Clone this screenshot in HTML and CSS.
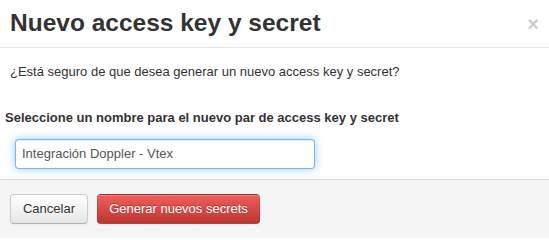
FILE: index.html
```html
<!DOCTYPE html>
<html lang="es">
<head>
<meta charset="utf-8">
<title>Nuevo access key y secret</title>
<link rel="stylesheet" href="styles.css">
</head>
<body>
<div class="modal">
  <div class="modal-header">
    <h3 class="modal-title">Nuevo access key y secret</h3>
    <button class="close" type="button" aria-label="Cerrar">&times;</button>
  </div>
  <div class="modal-body">
    <p class="question">¿Está seguro de que desea generar un nuevo access key y secret?</p>
    <label class="field-label" for="keyname">Seleccione un nombre para el nuevo par de access key y secret</label>
    <input class="text-input" id="keyname" type="text" value="Integración Doppler - Vtex">
  </div>
  <div class="modal-footer">
    <button class="btn btn-default" type="button">Cancelar</button>
    <button class="btn btn-danger" type="button">Generar nuevos secrets</button>
  </div>
</div>
</body>
</html>
```
FILE: styles.css
```css
html, body {
  margin: 0;
  padding: 0;
  background: #ffffff;
}
body {
  font-family: "Liberation Sans", Arial, sans-serif;
  font-size: 13px;
  line-height: 20px;
  color: #333333;
}
.modal {
  width: 549px;
}
.modal-header {
  display: flex;
  justify-content: space-between;
  align-items: flex-start;
  padding: 8px 10px 9px 10px;
  border-bottom: 1px solid #e5e5e5;
}
.modal-title {
  margin: 0;
  font-size: 24.5px;
  line-height: 30px;
  font-weight: bold;
  color: #333333;
}
.close {
  margin: 6px 0 0 0;
  padding: 0;
  border: 0;
  background: transparent;
  font-family: "Liberation Sans", Arial, sans-serif;
  font-size: 20px;
  font-weight: bold;
  line-height: 20px;
  color: #000000;
  opacity: 0.2;
  text-shadow: 0 1px 0 #ffffff;
  cursor: pointer;
}
.modal-body {
  display: flex;
  flex-direction: column;
  align-items: flex-start;
  padding: 14px 0 10px 0;
}
.question {
  margin: 0 0 26px 10px;
}
.field-label {
  display: block;
  margin: 0 0 11px 5px;
  font-weight: bold;
}
.text-input {
  box-sizing: border-box;
  width: 300px;
  height: 30px;
  margin: 0 0 0 15px;
  padding: 3px 6px 5px 6px;
  font-family: "Liberation Sans", Arial, sans-serif;
  font-size: 13px;
  line-height: 20px;
  color: #555555;
  background: #ffffff;
  border: 1px solid rgba(82, 168, 236, 0.8);
  border-radius: 4px;
  box-shadow: inset 0 1px 1px rgba(0, 0, 0, 0.075), 0 0 8px rgba(82, 168, 236, 0.6);
  outline: none;
}
.modal-footer {
  display: flex;
  gap: 9px;
  padding: 14px 10px 14px 10px;
  background: #f5f5f5;
  border-top: 1px solid #dddddd;
}
.btn {
  box-sizing: border-box;
  height: 30px;
  padding: 4px 0;
  font-family: "Liberation Sans", Arial, sans-serif;
  font-size: 13px;
  line-height: 20px;
  text-align: center;
  white-space: nowrap;
  border-radius: 4px;
  cursor: pointer;
}
.btn-default {
  width: 78px;
  color: #333333;
  text-shadow: 0 1px 1px rgba(255, 255, 255, 0.75);
  background: linear-gradient(to bottom, #ffffff, #e6e6e6);
  border: 1px solid #cccccc;
  border-bottom-color: #b3b3b3;
  box-shadow: inset 0 1px 0 rgba(255, 255, 255, 0.2), 0 1px 2px rgba(0, 0, 0, 0.05);
}
.btn-danger {
  width: 163px;
  color: #ffffff;
  text-shadow: 0 -1px 0 rgba(0, 0, 0, 0.25);
  background: linear-gradient(to bottom, #ee5f5b, #bd362f);
  border: 1px solid rgba(0, 0, 0, 0.1);
  border-bottom-color: rgba(0, 0, 0, 0.25);
  box-shadow: inset 0 1px 0 rgba(255, 255, 255, 0.2), 0 1px 2px rgba(0, 0, 0, 0.05);
}
```
